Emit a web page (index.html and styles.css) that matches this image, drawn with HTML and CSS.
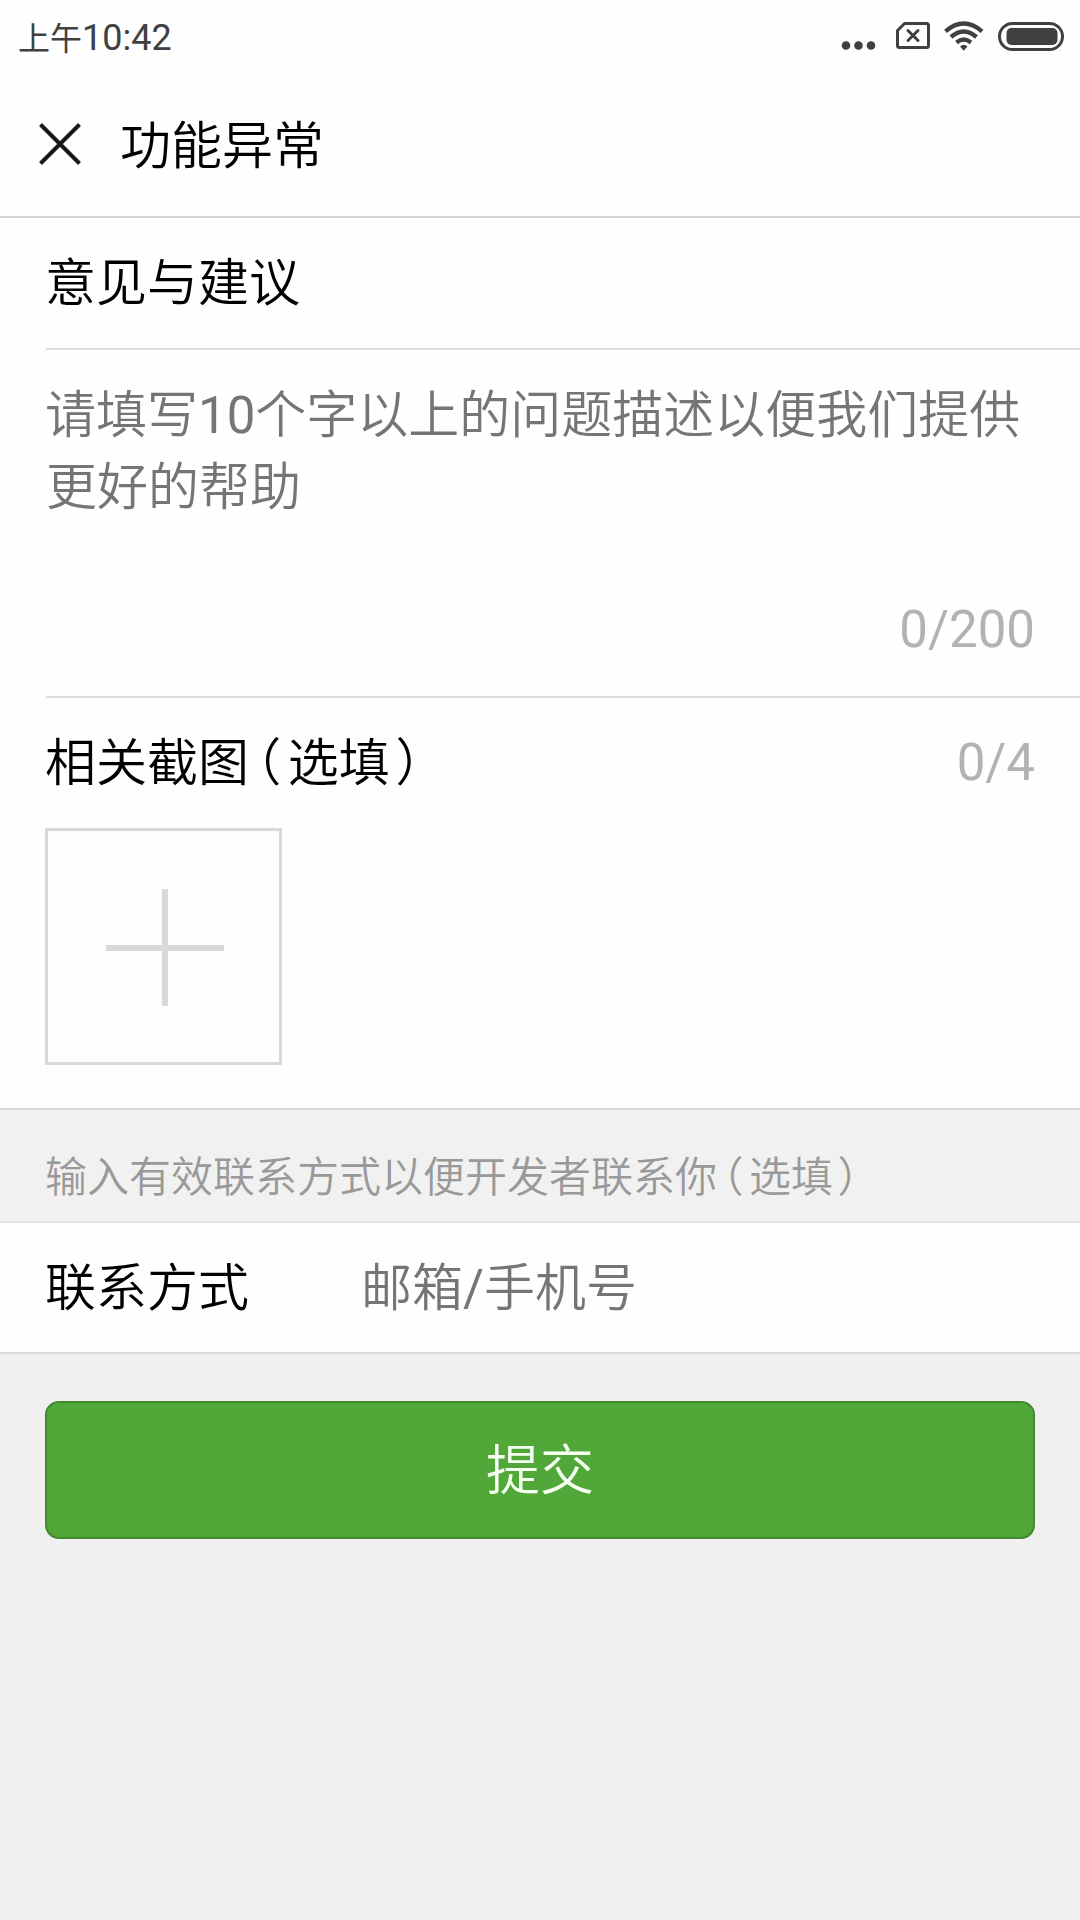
FILE: index.html
```html
<!DOCTYPE html>
<html lang="zh-CN">
<head>
<meta charset="utf-8">
<title>功能异常</title>
<link rel="stylesheet" href="styles.css">
</head>
<body>
<div class="status">
  <div class="time"><span class="ampm">上午</span><span>10:42</span></div>
  <svg class="status-icons" width="230" height="72" viewBox="0 0 230 72" fill="none" stroke="#404040">
    <g fill="#404040" stroke="none">
      <circle cx="16" cy="45.5" r="4.3"/><circle cx="28.5" cy="45.5" r="4.3"/><circle cx="41" cy="45.5" r="4.3"/>
    </g>
    <path d="M74.500 23.500H96.500Q98.500 23.500 98.500 25.500V45.500Q98.500 47.500 96.500 47.500H69.500Q67.500 47.500 67.500 45.500V30.500Z" stroke-width="3" stroke-linejoin="round"/>
    <path d="M78 30.500L88 40.500M88 30.500L78 40.500" stroke-width="3" stroke-linecap="round"/>
    <g stroke-width="4.300">
      <path d="M115.500 31.300Q133.700 15.700 152 31.300"/>
      <path d="M121 37Q133.700 26 146.500 37"/>
      <path d="M126.500 42.500Q133.700 36.500 141 42.500"/>
    </g>
    <path d="M130 46.500Q133.700 43 137.500 46.500L133.700 50.700Z" fill="#404040" stroke="none"/>
    <rect x="169.500" y="23.500" width="63" height="26" rx="13" stroke-width="3"/>
    <rect x="176.500" y="28" width="51" height="17" rx="5" fill="#404040" stroke="none"/>
  </svg>
</div>
<header class="header">
  <svg width="42" height="42" viewBox="0 0 42 42" stroke="#1a1a1a" stroke-width="4"><path d="M1.500 1.500L40.500 40.500M40.500 1.500L1.500 40.500"/></svg>
  <h1>功能异常</h1>
</header>
<main>
  <section class="feedback">
    <h2 class="label feedback-title">意见与建议</h2>
    <div class="description">
      <p class="placeholder">请填写<span class="num">10</span>个字以上的问题描述以便我们提供更好的帮助</p>
      <div class="count">0/200</div>
    </div>
    <div class="shots-head">
      <h2 class="label">相关截图<span class="open">（</span>选填<span class="close">）</span></h2>
      <div class="count">0/4</div>
    </div>
    <div class="upload">
      <svg width="119" height="119" viewBox="0 0 119 119" stroke="#d9d9d9" stroke-width="6"><path d="M1 60H119M60 1V118"/></svg>
    </div>
  </section>
  <p class="hint">输入有效联系方式以便开发者联系你<span class="open">（</span>选填<span class="close">）</span></p>
  <div class="contact">
    <span class="label">联系方式</span>
    <span class="contact-input">邮箱<span class="num">/</span>手机号</span>
  </div>
  <div class="submit">提交</div>
</main>
</body>
</html>
```
FILE: styles.css
```css
* { box-sizing: border-box; margin: 0; padding: 0; }
body {
  width: 1080px;
  height: 1920px;
  overflow: hidden;
  background: #f0f0f0;
  color: #000;
  font: 350 51px/72px Roboto, "Noto Sans CJK SC", sans-serif;
}
h1, h2 { font-size: 51px; font-weight: inherit; line-height: 72px; }
.status {
  display: flex;
  justify-content: space-between;
  height: 72px;
  padding: 0 20px 0 18px;
  background: #fefefe;
}
.time {
  display: flex;
  align-items: baseline;
  color: #404040;
  font-size: 36px;
  font-weight: 400;
  line-height: 76px;
}
.ampm { font-size: 32px; }
.status-icons { overflow: visible; flex: none; }
.header {
  display: flex;
  align-items: center;
  gap: 39px;
  height: 146px;
  padding: 0 0 0 39px;
  background: #fefefe;
  border-bottom: 2px solid #d3d5d4;
}
.header h1 { padding-top: 5px; }
.feedback {
  height: 892px;
  padding-left: 46px;
  background: #fefefe;
  border-bottom: 2px solid #d9d9d9;
}
.label, .placeholder { text-indent: -1px; }
.feedback-title { height: 132px; padding-top: 30px; border-bottom: 2px solid #dcdcdc; }
.description {
  display: flex;
  flex-direction: column;
  justify-content: space-between;
  height: 348px;
  padding: 30px 45px 30px 0;
  border-bottom: 2px solid #dcdcdc;
}
.placeholder, .contact-input { color: #757575; }
.placeholder { margin-right: -10px; }
.num { font-weight: 400; }
.count { color: #b2b2b2; text-align: right; font-weight: 400; }
.shots-head { display: flex; justify-content: space-between; height: 130px; padding: 30px 45px 0 0; }
.shots-head .count { margin-top: -1px; }
.open, .close { font-feature-settings: "halt"; }
.open { margin: 0 0.13em; }
.close { margin-left: 0.11em; }
.upload {
  display: flex;
  align-items: center;
  justify-content: center;
  width: 237px;
  height: 237px;
  margin-left: -1px;
  padding: 1px 0 0 1px;
  border: 3px solid #d9d9d9;
}
.hint {
  height: 113px;
  padding: 32px 0 0 45px;
  color: #999;
  background: #f1f1f1;
  border-bottom: 2px solid #e1e1e1;
  font-size: 42px;
}
.contact {
  display: flex;
  align-items: center;
  height: 131px;
  padding: 3px 0 0 46px;
  background: #fefefe;
  border-bottom: 2px solid #dadada;
}
.contact .label { width: 315px; }
.submit {
  height: 138px;
  margin: 47px 45px 0;
  padding-top: 2px;
  border: 2px solid #43892f;
  border-radius: 14px;
  background: #51a838;
  color: #f5fff2;
  font-size: 54px;
  line-height: 134px;
  text-align: center;
}
```
